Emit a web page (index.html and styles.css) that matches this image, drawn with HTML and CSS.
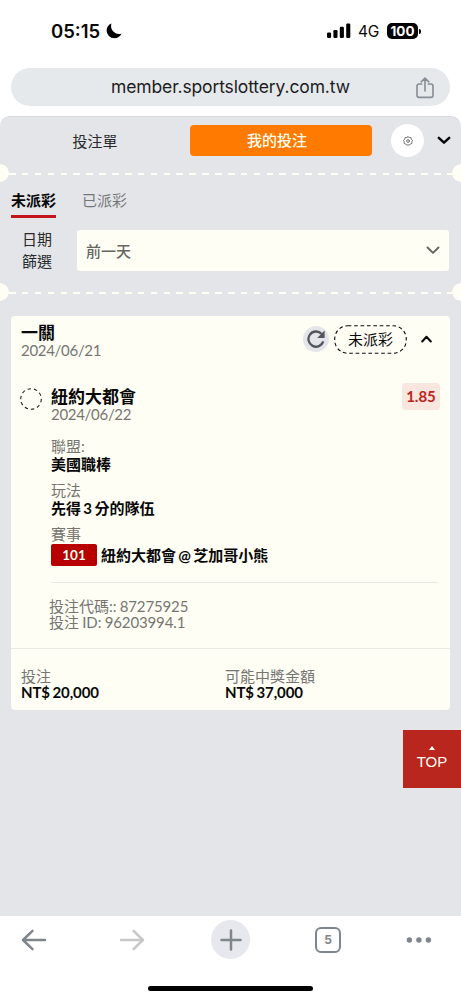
FILE: index.html
```html
<!DOCTYPE html>
<html lang="zh-Hant">
<head>
<meta charset="utf-8">
<meta name="viewport" content="width=device-width, initial-scale=1">
<title>我的投注</title>
<link rel="stylesheet" href="styles.css">
</head>
<body>
<div class="phone">
  <header class="status">
    <span class="clock">05:15</span>
    <svg class="moon" width="16" height="16" viewBox="0 0 16 16"><path d="M5.400.500C2.500 1.600.600 4.400.600 7.600A7.700 7.700 0 0 0 8.300 15.300C11.600 15.300 14.400 13.300 15.500 10.400 9.800 12.600 3.400 7.200 5.400.500Z"/></svg>
    <svg class="signal" width="24" height="16" viewBox="0 0 24 16"><rect x="0" y="9.5" width="4.1" height="5.5" rx="1.2"/><rect x="6.4" y="7" width="4.1" height="8" rx="1.2"/><rect x="12.8" y="3.8" width="4.1" height="11.2" rx="1.2"/><rect x="19.2" y=".5" width="4.1" height="14.5" rx="1.2"/></svg>
    <span class="network">4G</span>
    <span class="battery">100</span>
    <span class="battery-tip"></span>
  </header>
  <div class="address">
    <span class="url">member.sportslottery.com.tw</span>
    <svg class="share" width="18" height="22" viewBox="0 0 18 22"><path d="M5.700 7H3.200A2.200 2.200 0 0 0 1 9.200V18.200A2.200 2.200 0 0 0 3.200 20.400H14.800A2.200 2.200 0 0 0 17 18.200V9.200A2.200 2.200 0 0 0 14.800 7H12.300M9 14V1.300M5.200 4.800 9 1.200 12.800 4.800"/></svg>
  </div>

  <main class="page">
    <nav class="modes">
      <span class="mode">投注單</span>
      <span class="mode mode-active">我的投注</span>
      <span class="gear"><svg width="10" height="10" viewBox="0 0 10 10"><path d="M5 .600 6.200 1.500 7.900 1.500 8.300 3.100 9.500 4.400 8.900 5.800 8.900 7.300 7.400 7.900 6.400 9.200 5 8.800 3.600 9.200 2.600 7.900 1.100 7.300 1.100 5.800.500 4.400 1.700 3.100 2.100 1.500 3.800 1.500Z"/><circle cx="5" cy="5" r="1.400"/></svg></span>
      <svg class="collapse" width="14" height="9" viewBox="0 0 14 9"><path d="M1.800 1.800 7 6.700 12.200 1.800"/></svg>
    </nav>
    <div class="perforation"></div>
    <section class="filters">
      <div class="tabs">
        <span class="tab tab-active">未派彩</span>
        <span class="tab">已派彩</span>
      </div>
      <div class="date-filter">
        <span class="date-label">日期<br>篩選</span>
        <div class="select"><span>前一天</span><svg width="14" height="9" viewBox="0 0 14 9"><path d="M1.500 1.500 7 6.900 12.500 1.500"/></svg></div>
      </div>
    </section>
    <div class="perforation"></div>

    <article class="ticket">
      <div class="ticket-head">
        <div class="ticket-title"><b>一關</b><span>2024/06/21</span></div>
        <span class="refresh"><svg width="18" height="18" viewBox="0 0 18 18"><path class="arc" d="M16.300 11.400A7.600 7.600 0 1 1 14.500 3.800"/><path class="tip" d="M17.600.600V8H10.200Z"/></svg></span>
        <span class="state"><svg class="state-ring" width="73" height="29" viewBox="0 0 73 29"><rect x=".75" y=".75" width="71.500" height="27.500" rx="13"/></svg>未派彩</span>
        <svg class="fold" width="11" height="8" viewBox="0 0 11 8"><path d="M1.200 6.500 5.500 1.800 9.800 6.500"/></svg>
      </div>
      <div class="pick">
        <svg class="ring" width="22" height="22" viewBox="0 0 22 22"><circle cx="11" cy="11" r="10.300"/></svg>
        <div class="pick-body">
          <div class="pick-head">
            <div class="ticket-title"><b>紐約大都會</b><span>2024/06/22</span></div>
            <span class="odds">1.85</span>
          </div>
          <dl class="facts">
            <dt>聯盟:</dt><dd>美國職棒</dd>
            <dt>玩法</dt><dd>先得 3 分的隊伍</dd>
            <dt>賽事</dt><dd class="match"><span class="match-no">101</span>紐約大都會 @ 芝加哥小熊</dd>
          </dl>
          <div class="codes"><p>投注代碼:: <span class="num">87275925</span></p><p>投注 ID: <span class="num">96203994.1</span></p></div>
        </div>
      </div>
      <div class="totals">
        <div><span>投注</span><b>NT$ 20,000</b></div>
        <div><span>可能中獎金額</span><b>NT$ 37,000</b></div>
      </div>
    </article>
    <div class="to-top"><i class="caret"></i>TOP</div>
  </main>

  <footer class="toolbar">
    <svg width="26" height="22" viewBox="0 0 26 22"><path d="M24 11H2M11.500 1.800 2 11 11.500 20.200"/></svg>
    <svg class="dim" width="26" height="22" viewBox="0 0 26 22"><path d="M2 11H24M14.500 1.800 24 11 14.500 20.200"/></svg>
    <span class="plus"><svg width="24" height="24" viewBox="0 0 24 24"><path d="M2.500 12H21.500M12 2.500V21.500"/></svg></span>
    <span class="tab-count">5</span>
    <svg class="dots" width="26" height="22" viewBox="0 0 26 22"><circle cx="3.400" cy="11" r="2.700"/><circle cx="12.900" cy="11" r="2.700"/><circle cx="22.400" cy="11" r="2.700"/></svg>
  </footer>
  <div class="home"></div>
</div>
</body>
</html>
```

FILE: styles.css
```css
* { box-sizing: border-box; }
body {
  margin: 0;
  background: #fff;
  color: #080808;
  font-family: Lato, "Noto Sans CJK TC", sans-serif;
  font-size: 15px;
}
p, dl, dd { margin: 0; }
svg { display: block; flex: none; fill: none; stroke-linecap: round; stroke-linejoin: round; }
.phone { display: flex; flex-direction: column; width: 461px; height: 1000px; overflow: hidden; }

.status {
  display: flex;
  align-items: center;
  height: 68px;
  padding: 0 40px 6px 51px;
  font-family: Inter, sans-serif;
}
.clock { width: 51px; font-size: 18.500px; font-weight: 600; }
.moon { margin-left: 4px; fill: #000; }
.signal { margin-left: 205px; fill: #000; }
.network { width: 22px; margin-left: 7px; padding-top: 1px; font-size: 15.500px; letter-spacing: -0.2px; }
.battery {
  width: 31px;
  height: 16px;
  margin-left: 7px;
  border-radius: 5px;
  background: #000;
  color: #fff;
  font-size: 13.500px;
  font-weight: 700;
  line-height: 16px;
  text-align: center;
}
.battery-tip { width: 2px; height: 5px; margin-left: 1px; border-radius: 0 2px 2px 0; background: #000; }

.address {
  display: flex;
  align-items: center;
  height: 38px;
  flex: none;
  margin: 0 11px 10px;
  padding: 0 16px 0 100px;
  border-radius: 19px;
  background: #e6e9ec;
  color: #1b1c1e;
  font: 17.500px/38px Inter, sans-serif;
  letter-spacing: -0.13px;
}
.url { flex: 1; white-space: nowrap; }
.share { margin-top: 2px; stroke: #868c95; stroke-width: 1.600; }

.page {
  height: 800px;
  flex: none;
  border-top: 1px solid #d8dadd;
  border-radius: 10px 10px 0 0;
  background: #e4e5e8;
}
.modes { display: flex; align-items: center; height: 47px; padding-right: 10px; }
.mode { width: 190px; padding-bottom: 1px; text-align: center; color: #292a2c; }
.mode-active {
  width: 182px;
  height: 31px;
  padding-right: 8px;
  border-radius: 4px;
  background: #ff7a00;
  color: #fffef5;
  line-height: 30px;
  font-weight: 500;
}
.gear {
  display: grid;
  place-items: center;
  width: 33px;
  height: 33px;
  margin-left: 19px;
  border-radius: 50%;
  background: #fff;
}
.gear svg { stroke: #555; stroke-width: .8; }
.collapse { margin-left: auto; stroke: #080808; stroke-width: 2.500; }

.perforation {
  height: 18px;
  background:
    radial-gradient(circle at 0 50%, #fffef5 8.500px, transparent 9px),
    radial-gradient(circle at 100% 50%, #fffef5 8.500px, transparent 9px),
    repeating-linear-gradient(90deg, #fffef5 0 6.600px, transparent 6.600px 12.880px) 8.500px 9px / 452px 2px no-repeat;
}
.filters { height: 101px; padding: 6px 12px 0 11px; }
.tabs { display: flex; gap: 26px; }
.tab { height: 30px; line-height: 24px; color: #757679; }
.tab-active { border-bottom: 3px solid #c2161c; color: #080808; font-weight: 700; }
.date-filter { display: flex; align-items: center; margin-top: 11px; }
.date-label { width: 66px; padding-left: 11px; color: #292a2c; line-height: 21.500px; }
.select {
  display: flex;
  align-items: center;
  justify-content: space-between;
  flex: 1;
  height: 41px;
  padding: 0 9px;
  border-radius: 3px;
  background: #fffef5;
  color: #666662;
  font-weight: 500;
}
.select span { padding-bottom: 1px; }
.select svg { stroke: #666662; stroke-width: 2; }

.ticket {
  height: 394px;
  margin: 15px 11px 0;
  border-radius: 4px;
  background: #fffef5;
}
.ticket-head { display: flex; align-items: center; height: 46px; padding: 0 18px 0 10px; }
.ticket-title { flex: 1; padding-top: 5px; color: #757571; line-height: 17px; }
.ticket-title b { display: block; color: #080808; font-size: 17px; line-height: 18px; }
.ticket-title span { letter-spacing: -0.3px; }
.refresh { display: grid; place-items: center; width: 26px; height: 26px; margin-bottom: 1px; border-radius: 50%; background: #e4e5e8; }
.arc { stroke: #54555a; stroke-width: 2.300; stroke-linecap: butt; }
.tip { fill: #54555a; }
.state { position: relative; width: 73px; margin: 0 0 0 5px; line-height: 28px; text-align: center; }
.state-ring { position: absolute; inset: 0; stroke: #080808; stroke-width: 1.100; stroke-dasharray: 3.600 2.800; stroke-linecap: butt; }
.fold { margin: 0 0 1px 14px; stroke: #080808; stroke-width: 2; }

.pick { display: flex; height: 286px; padding: 22px 10px 0 9px; }
.ring { margin-top: 4px; stroke: #222; stroke-width: 1.100; stroke-dasharray: 3.400 3; stroke-linecap: butt; }
.pick-body { flex: 1; padding-left: 9px; }
.pick-head { display: flex; }
.pick-head .ticket-title { padding-top: 4px; }
.odds {
  width: 38px;
  height: 27px;
  margin-top: -1px;
  border-radius: 4px;
  background: #f8e6df;
  color: #b8261d;
  font-weight: 700;
  line-height: 27px;
  text-align: center;
}
.facts { margin-top: 14px; padding-bottom: 16px; margin-right: 2px; border-bottom: 1px solid #e9e8e2; line-height: 18px; }
.facts dt { color: #757571; }
.facts dd { margin-bottom: 8px; font-weight: 700; word-spacing: -1.300px; }
.facts .match { display: flex; align-items: center; height: 23px; margin: 0; }
.match-no {
  width: 46px;
  height: 22px;
  margin-right: 4px;
  border-radius: 2px;
  background: #b80000;
  color: #fffef5;
  font-size: 13.500px;
  line-height: 22px;
  text-align: center;
}
.codes { margin: 15px 0 0 -2px; color: #757571; line-height: 16px; word-spacing: -0.700px; }
.num { letter-spacing: -0.120px; }
.totals {
  display: grid;
  grid-template-columns: 204px 1fr;
  padding: 19px 10px 0;
  border-top: 1px solid #e9e8e2;
  color: #757571;
  line-height: 16px;
}
.totals b { display: block; color: #080808; letter-spacing: -0.100px; word-spacing: -1px; }

.to-top {
  display: flex;
  flex-direction: column;
  align-items: center;
  width: 58px;
  height: 58px;
  margin: 20px 0 0 auto;
  padding-top: 16px;
  background: #b8261d;
  color: #fffef5;
  font: 15px/18px "Liberation Sans", sans-serif;
}
.caret { margin-bottom: 3px; border: solid transparent; border-width: 0 3px 4px; border-bottom-color: #fffef5; }

.toolbar {
  display: flex;
  align-items: center;
  height: 47px;
  padding-left: 21px;
}
.toolbar svg { stroke: #7e868b; stroke-width: 2.500; }
.toolbar .dim { margin-left: 72px; stroke: #c8c8c8; }
.plus { display: grid; place-items: center; width: 39px; height: 39px; margin-left: 66px; border-radius: 50%; background: #e7e8ed; }
.tab-count {
  width: 26px;
  height: 26px;
  margin-left: 65px;
  border: 2px solid #7e868b;
  border-radius: 6px;
  color: #7e868b;
  font: 700 12px/22px Inter, sans-serif;
  text-align: center;
}
.toolbar .dots { margin-left: 65px; fill: #7e868b; stroke: none; }
.home { flex: none; width: 165px; height: 5px; margin: 23px 0 0 148px; border-radius: 3px; background: #000; }
```
